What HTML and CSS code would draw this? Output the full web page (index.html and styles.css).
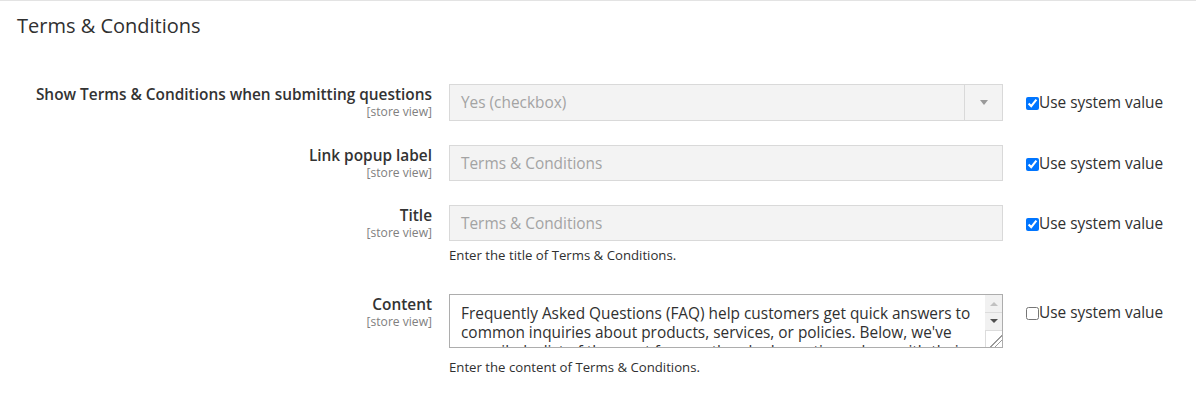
FILE: index.html
```html
<!DOCTYPE html>
<html>
<head>
<meta charset="utf-8">
<link rel="stylesheet" href="styles.css">
</head>
<body>
<section class="section">
  <h2 class="section-title">Terms &amp; Conditions</h2>
  <div class="form">
    <div class="row">
      <div class="label"><span class="label-text">Show Terms &amp; Conditions when submitting questions</span><span class="scope">[store view]</span></div>
      <div class="value">
        <div class="select disabled">
          <span class="select-text">Yes (checkbox)</span>
          <span class="select-btn"><span class="arrow"></span></span>
        </div>
      </div>
      <label class="use-default"><input type="checkbox" checked>Use system value</label>
    </div>
    <div class="row">
      <div class="label"><span class="label-text">Link popup label</span><span class="scope">[store view]</span></div>
      <div class="value">
        <div class="input disabled">Terms &amp; Conditions</div>
      </div>
      <label class="use-default"><input type="checkbox" checked>Use system value</label>
    </div>
    <div class="row">
      <div class="label"><span class="label-text">Title</span><span class="scope">[store view]</span></div>
      <div class="value">
        <div class="input disabled">Terms &amp; Conditions</div>
        <p class="note">Enter the title of Terms &amp; Conditions.</p>
      </div>
      <label class="use-default"><input type="checkbox" checked>Use system value</label>
    </div>
    <div class="row">
      <div class="label"><span class="label-text">Content</span><span class="scope">[store view]</span></div>
      <div class="value">
        <div class="textarea-wrap">
          <textarea class="textarea">Frequently Asked Questions (FAQ) help customers get quick answers to common inquiries about products, services, or policies. Below, we've compiled a list of the most frequently asked questions along with their answers to help you find the information you need.</textarea>
          <div class="scrollbar">
            <span class="sb-btn"><span class="tri-up"></span></span>
            <span class="sb-btn sb-down"><span class="tri-down"></span></span>
            <span class="resizer"></span>
          </div>
        </div>
        <p class="note note-last">Enter the content of Terms &amp; Conditions.</p>
      </div>
      <label class="use-default"><input type="checkbox">Use system value</label>
    </div>
  </div>
</section>
</body>
</html>
```
FILE: styles.css
```css
* { box-sizing: border-box; }
html, body {
  margin: 0;
  padding: 0;
  background: #fff;
  font-family: "Open Sans", "Liberation Sans", sans-serif;
  color: #303030;
}
.section {
  border-top: 1px solid #e3e3e3;
}
.section-title {
  margin: 0;
  padding: 11px 0 0 17px;
  font-size: 20px;
  line-height: 28px;
  font-weight: 400;
  color: #303030;
}
.form {
  margin-top: 44px;
}
.row {
  display: grid;
  grid-template-columns: 432px 554px auto;
  column-gap: 17px;
  margin-bottom: 24px;
}
.label {
  display: flex;
  flex-direction: column;
  align-items: flex-end;
  text-align: right;
  padding-top: 1px;
}
.label-text {
  font-size: 15.4px;
  font-weight: 600;
  line-height: 20px;
  color: #333333;
}
.scope {
  font-size: 12.1px;
  line-height: 13px;
  color: #808080;
}
.value {
  display: flex;
  flex-direction: column;
}
.disabled {
  background: #f3f3f3;
  border: 1px solid #d9d9d9;
  color: #a3a3a3;
}
.input {
  height: 36px;
  padding: 1px 11px 0;
  font-size: 15.4px;
  line-height: 33px;
}
.select {
  height: 37px;
  display: flex;
  align-items: stretch;
  font-size: 15.4px;
}
.select-text {
  flex: 1;
  padding: 1px 11px 0;
  line-height: 34px;
}
.select-btn {
  width: 38px;
  border-left: 1px solid #d9d9d9;
  display: flex;
  align-items: center;
  justify-content: center;
}
.arrow {
  width: 0;
  height: 0;
  border-left: 4px solid transparent;
  border-right: 4px solid transparent;
  border-top: 5px solid #9a9a9a;
}
.textarea-wrap {
  position: relative;
  width: 554px;
  height: 54px;
}
.textarea {
  display: block;
  width: 554px;
  height: 54px;
  margin: 0;
  padding: 9px 28px 8px 11px;
  border: 1px solid #adadad;
  font-family: "Open Sans", "Liberation Sans", sans-serif;
  font-size: 15.4px;
  line-height: 19px;
  color: #303030;
  overflow: hidden;
  resize: none;
}
.scrollbar {
  position: absolute;
  top: 1px;
  right: 1px;
  bottom: 1px;
  width: 17px;
  background: #f1f1f1;
  display: flex;
  flex-direction: column;
}
.sb-btn {
  height: 17px;
  display: flex;
  align-items: center;
  justify-content: center;
}
.sb-down {
  border-top: 1px solid #dcdcdc;
}
.tri-up {
  width: 0;
  height: 0;
  border-left: 4px solid transparent;
  border-right: 4px solid transparent;
  border-bottom: 4px solid #c1c1c1;
}
.tri-down {
  width: 0;
  height: 0;
  border-left: 4px solid transparent;
  border-right: 4px solid transparent;
  border-top: 4px solid #505050;
}
.resizer {
  flex: 1;
  margin-top: 1px;
  background:
    linear-gradient(135deg, transparent 0 62%, #9a9a9a 62% 66%, transparent 66% 76%, #9a9a9a 76% 80%, transparent 80%),
    #ffffff;
  border-top: 1px solid #dcdcdc;
  border-left: 1px solid #dcdcdc;
}
.note {
  margin: 5px 0 6px;
  font-size: 13.2px;
  line-height: 18px;
  color: #303030;
}
.note-last {
  margin-top: 10px;
}
.use-default {
  display: flex;
  align-items: center;
  padding-left: 6px;
  padding-top: 9px;
  height: 29px;
  font-size: 15.4px;
  line-height: 20px;
  color: #303030;
}
.use-default input {
  margin: 0;
  width: 13px;
  height: 13px;
}
```
